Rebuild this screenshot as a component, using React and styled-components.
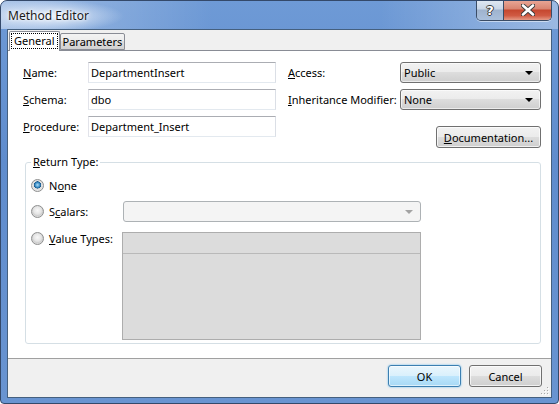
import React from 'react';
import styled, { createGlobalStyle } from 'styled-components';

const GlobalStyle = createGlobalStyle`
  html, body {
    margin: 0;
    padding: 0;
    background: #ffffff;
  }
  body {
    font-family: "Segoe UI", "Noto Sans", "DejaVu Sans", sans-serif;
    font-size: 11px;
    color: #000;
  }
`;

function App() {
  return (
    <>
      <GlobalStyle />
      <Window>
        <TitleBar>
          <Title>Method Editor</Title>
          <CaptionButtons>
            <HelpButton>?</HelpButton>
            <CloseButton>
              <svg width="14" height="12" viewBox="0 0 14 12">
                <path d="M2 1.5 L12 10.5 M12 1.5 L2 10.5" stroke="#3b3b3b" strokeWidth="4.4" strokeLinecap="round" />
                <path d="M2 1.5 L12 10.5 M12 1.5 L2 10.5" stroke="#ffffff" strokeWidth="2.6" strokeLinecap="round" />
              </svg>
            </CloseButton>
          </CaptionButtons>
        </TitleBar>

        <Client>
          <TabStrip>
            <Tab active>
              <FocusRect>General</FocusRect>
            </Tab>
            <Tab>Parameters</Tab>
          </TabStrip>

          <Panel>
            <FormGrid>
              <Label><u>N</u>ame:</Label>
              <TextInput defaultValue="DepartmentInsert" />
              <span />
              <Label><u>A</u>ccess:</Label>
              <Combo>
                <span>Public</span>
                <Arrow />
              </Combo>

              <Label><u>S</u>chema:</Label>
              <TextInput defaultValue="dbo" />
              <span />
              <Label><u>I</u>nheritance Modifier:</Label>
              <Combo>
                <span>None</span>
                <Arrow />
              </Combo>

              <Label><u>P</u>rocedure:</Label>
              <TextInput defaultValue="Department_Insert" />
              <DocButton><u>D</u>ocumentation...</DocButton>
            </FormGrid>

            <GroupBox>
              <Legend><u>R</u>eturn Type:</Legend>
              <ReturnGrid>
                <RadioRow>
                  <Radio checked />
                  <span>N<u>o</u>ne</span>
                </RadioRow>
                <span />

                <RadioRow>
                  <Radio />
                  <span>S<u>c</u>alars:</span>
                </RadioRow>
                <DisabledCombo>
                  <Arrow disabled />
                </DisabledCombo>

                <RadioRow top>
                  <Radio />
                  <span><u>V</u>alue Types:</span>
                </RadioRow>
                <ListBox>
                  <ListHeader />
                </ListBox>
              </ReturnGrid>
            </GroupBox>
          </Panel>

          <Footer>
            <PushButton primary>OK</PushButton>
            <PushButton>Cancel</PushButton>
            <Grip>
              <svg width="10" height="10" viewBox="0 0 10 10">
                {[[8, 2], [5, 5], [8, 5], [2, 8], [5, 8], [8, 8]].map(([x, y]) => (
                  <g key={`${x}-${y}`}>
                    <rect x={x} y={y} width="1" height="1" fill="#ffffff" />
                    <rect x={x - 1} y={y - 1} width="1" height="1" fill="#a8a8a8" />
                  </g>
                ))}
              </svg>
            </Grip>
          </Footer>
        </Client>
      </Window>
    </>
  );
}

export default App;

const Window = styled.div`
  width: 559px;
  height: 404px;
  box-sizing: border-box;
  border: 1px solid #34496a;
  border-radius: 7px 7px 4px 4px;
  background: linear-gradient(to bottom, #6e9ad6 0%, #5f8ccd 40%, #6994d1 100%);
  display: flex;
  flex-direction: column;
  overflow: hidden;
`;

const TitleBar = styled.div`
  height: 28px;
  display: flex;
  align-items: flex-start;
  padding-left: 7px;
  background:
    radial-gradient(ellipse 75px 16px at 48px 15px, rgba(235, 242, 252, 0.95), rgba(235, 242, 252, 0) 100%),
    linear-gradient(90deg, rgba(255, 255, 255, 0.45) 0%, rgba(255, 255, 255, 0.18) 18%, rgba(255, 255, 255, 0) 38%, rgba(255, 255, 255, 0) 68%, rgba(255, 255, 255, 0.32) 100%);
`;

const Title = styled.div`
  line-height: 29px;
  font-size: 12px;
  color: #1a1a1a;
  text-shadow: 0 0 6px #ffffff, 0 0 3px #ffffff;
`;

const CaptionButtons = styled.div`
  margin-left: auto;
  margin-right: 6px;
  margin-top: -1px;
  display: flex;
  height: 20px;
  border: 1px solid #3a4c66;
  border-top: none;
  border-radius: 0 0 5px 5px;
  overflow: hidden;
  box-shadow: 0 1px 0 rgba(255, 255, 255, 0.5);
`;

const CaptionButton = styled.div`
  height: 100%;
  display: flex;
  align-items: center;
  justify-content: center;
`;

const HelpButton = styled(CaptionButton)`
  width: 26px;
  border-right: 1px solid #3a4c66;
  background: linear-gradient(to bottom, #e1e9f3 0%, #c9d6e7 45%, #9fb3ce 50%, #aac0dc 100%);
  font-family: "DejaVu Sans", sans-serif;
  font-weight: bold;
  font-size: 13px;
  color: #ffffff;
  text-shadow: -1px 0 #3b3b3b, 1px 0 #3b3b3b, 0 -1px #3b3b3b, 0 1px #3b3b3b;
`;

const CloseButton = styled(CaptionButton)`
  width: 47px;
  background: linear-gradient(to bottom, #eaa999 0%, #d98470 45%, #c5472f 50%, #d05a43 78%, #e49a86 100%);
`;

const Client = styled.div`
  flex: 1;
  margin: 0 6px 5px 6px;
  border: 1px solid #45607f;
  background: #f0f0f0;
  display: flex;
  flex-direction: column;
`;

const TabStrip = styled.div`
  height: 20px;
  display: flex;
  align-items: flex-end;
  padding-left: 1px;
`;

const Tab = styled.div`
  box-sizing: border-box;
  height: ${p => (p.active ? '20px' : '17px')};
  margin-bottom: ${p => (p.active ? '-1px' : '0')};
  padding: ${p => (p.active ? '1px 1px 0 1px' : '0 2px')};
  position: relative;
  z-index: ${p => (p.active ? 1 : 0)};
  border: 1px solid #898c95;
  border-bottom: ${p => (p.active ? 'none' : '1px solid #898c95')};
  border-radius: 2px 2px 0 0;
  background: ${p =>
    p.active
      ? '#ffffff'
      : 'linear-gradient(to bottom, #f3f3f3 0%, #ececec 50%, #dedede 50%, #d2d2d2 100%)'};
  display: flex;
  align-items: ${p => (p.active ? 'flex-start' : 'center')};
  line-height: 15px;
`;

const FocusRect = styled.span`
  border: 1px dotted #000;
  padding: 0 2px;
  line-height: 14px;
`;

const Panel = styled.div`
  height: 309px;
  box-sizing: border-box;
  background: #ffffff;
  border-top: 1px solid #898c95;
  border-bottom: 1px solid #a0a0a0;
  padding: 11px 9px 0 15px;
`;

const FormGrid = styled.div`
  display: grid;
  grid-template-columns: 65px 188px 12px 112px 141px;
  grid-auto-rows: 21px;
  row-gap: 6px;
  align-items: center;
`;

const Label = styled.div`
  white-space: nowrap;
`;

const TextInput = styled.input`
  box-sizing: border-box;
  width: 188px;
  height: 21px;
  margin: 0;
  padding: 0 2px;
  border: 1px solid;
  border-color: #abadb3 #dbdfe6 #e3e9ef #e2e3ea;
  font: inherit;
  color: #000;
  outline: none;
`;

const Combo = styled.div`
  box-sizing: border-box;
  height: 21px;
  display: flex;
  align-items: center;
  justify-content: space-between;
  padding: 0 7px 0 3px;
  border: 1px solid #707070;
  border-radius: 3px;
  background: linear-gradient(to bottom, #f2f2f2 0%, #ebebeb 50%, #dddddd 50%, #cfcfcf 100%);
  box-shadow: inset 0 0 0 1px rgba(255, 255, 255, 0.6);
`;

const Arrow = styled.span`
  width: 0;
  height: 0;
  border-left: 4px solid transparent;
  border-right: 4px solid transparent;
  border-top: 4px solid ${p => (p.disabled ? '#a3a3a3' : '#000')};
`;

const DocButton = styled.div`
  grid-column: 4 / 6;
  justify-self: end;
  align-self: start;
  margin-top: 10px;
  width: 105px;
  height: 22px;
  box-sizing: border-box;
  display: flex;
  align-items: center;
  justify-content: center;
  border: 1px solid #707070;
  border-radius: 3px;
  background: linear-gradient(to bottom, #f2f2f2 0%, #ebebeb 50%, #dddddd 50%, #cfcfcf 100%);
  box-shadow: inset 0 0 0 1px rgba(255, 255, 255, 0.7);
`;

const GroupBox = styled.fieldset`
  margin: 17px 0 0 2px;
  width: 516px;
  box-sizing: border-box;
  padding: 5px 5px 7px 5px;
  border: 1px solid #d5dfe5;
  border-radius: 3px;
`;

const Legend = styled.legend`
  padding: 0 2px;
  line-height: 16px;
`;

const ReturnGrid = styled.div`
  display: grid;
  grid-template-columns: 92px 298px;
  grid-template-rows: 20px 21px 108px;
  row-gap: 6px;
  & > :nth-child(5),
  & > :nth-child(6) {
    margin-top: 4px;
  }
`;

const RadioRow = styled.div`
  display: flex;
  align-items: ${p => (p.top ? 'flex-start' : 'center')};
  gap: 5px;
  white-space: nowrap;
  line-height: ${p => (p.top ? '13px' : 'normal')};
`;

const Radio = styled.span`
  flex: none;
  width: 13px;
  height: 13px;
  box-sizing: border-box;
  border-radius: 50%;
  border: 1px solid #8e8f8f;
  background: ${p =>
    p.checked
      ? 'radial-gradient(circle at 50% 45%, #b2dcf6 0%, #3e91c8 28%, #17568a 42%, #dcdcdc 46%, #f3f3f3 100%)'
      : 'radial-gradient(circle at 50% 40%, #f8f8f8 0%, #e4e4e4 45%, #d0d0d0 60%, #f2f2f2 100%)'};
`;

const DisabledCombo = styled.div`
  box-sizing: border-box;
  height: 21px;
  display: flex;
  align-items: center;
  justify-content: flex-end;
  padding-right: 7px;
  border: 1px solid #adb2b5;
  border-radius: 3px;
  background: #f4f4f4;
`;

const ListBox = styled.div`
  box-sizing: border-box;
  height: 108px;
  margin-left: -1px;
  border: 1px solid #adadad;
  background: #dcdcdc;
`;

const ListHeader = styled.div`
  height: 20px;
  border-bottom: 1px solid #b9b9b9;
`;

const Footer = styled.div`
  flex: 1;
  position: relative;
  display: flex;
  justify-content: flex-end;
  align-items: flex-start;
  gap: 8px;
  padding: 6px 9px 0 0;
`;

const PushButton = styled.div`
  width: 73px;
  height: 22px;
  box-sizing: border-box;
  display: flex;
  align-items: center;
  justify-content: center;
  border: 1px solid ${p => (p.primary ? '#3c7fb1' : '#707070')};
  border-radius: 3px;
  background: ${p =>
    p.primary
      ? 'linear-gradient(to bottom, #eaf6fd 0%, #d9f0fc 50%, #bee6fd 50%, #a7d9f5 100%)'
      : 'linear-gradient(to bottom, #f2f2f2 0%, #ebebeb 50%, #dddddd 50%, #cfcfcf 100%)'};
  box-shadow: ${p =>
    p.primary
      ? 'inset 0 0 0 1px rgba(255, 255, 255, 0.6), 0 0 2px #5ab6ee'
      : 'inset 0 0 0 1px rgba(255, 255, 255, 0.7)'};
`;

const Grip = styled.div`
  position: absolute;
  right: 1px;
  bottom: 1px;
  width: 10px;
  height: 10px;
  line-height: 0;
`;
